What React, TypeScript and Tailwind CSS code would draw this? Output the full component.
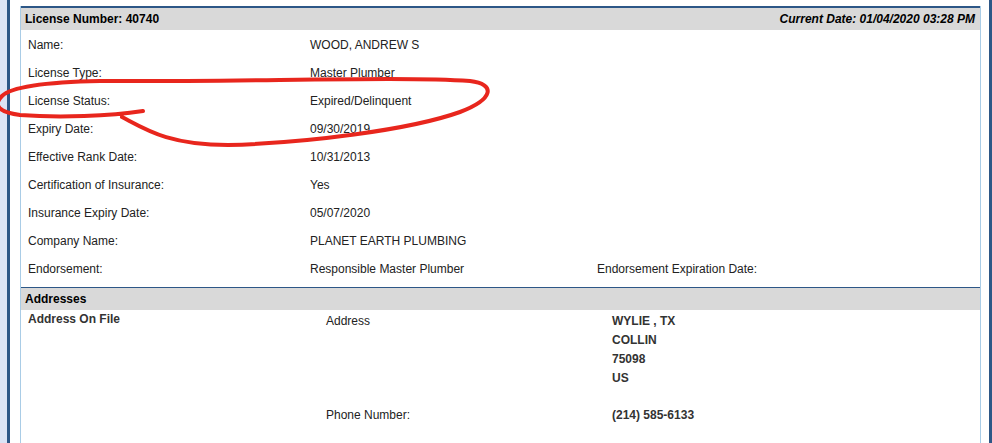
import React from 'react';

const rows: [string, string, string?][] = [
  ['Name:', 'WOOD, ANDREW S'],
  ['License Type:', 'Master Plumber'],
  ['License Status:', 'Expired/Delinquent'],
  ['Expiry Date:', '09/30/2019'],
  ['Effective Rank Date:', '10/31/2013'],
  ['Certification of Insurance:', 'Yes'],
  ['Insurance Expiry Date:', '05/07/2020'],
  ['Company Name:', 'PLANET EARTH PLUMBING'],
  ['Endorsement:', 'Responsible Master Plumber', 'Endorsement Expiration Date:'],
];

const App = () => {
  return (
    <div className="relative h-[443px] w-full overflow-hidden bg-[#dce4f6] pl-[7px] font-['Liberation_Sans',Arial,sans-serif] text-[12px] text-[#222]">
      <div className="h-full bg-white border-l-[3px] border-r-[3px] border-[#2d5787] pl-[10px] pr-[8px] pt-[6px]">
        <div className="h-full border-x border-[#a9cce6]">
          <header className="flex items-center justify-between h-[24px] border-t-2 border-[#2d5787] bg-[#d9d9d9] pl-[4px] pr-[5px] font-bold text-black">
            <p>License Number: 40740</p>
            <p className="italic">Current Date: 01/04/2020 03:28 PM</p>
          </header>
          <main className="pt-[1px] pb-[4px]">
            {rows.map(([label, value, extra]) => (
              <div key={label} className="grid grid-cols-[289px_287px_1fr] leading-[28px]">
                <p className="pl-[7px]">{label}</p>
                <p>{value}</p>
                <p>{extra}</p>
              </div>
            ))}
          </main>
          <section>
            <h2 className="h-[23px] border-t border-[#2d5787] bg-[#d9d9d9] pl-[4px] leading-[22px] font-bold text-black">
              Addresses
            </h2>
            <div className="grid grid-cols-[305px_286px_1fr] leading-[19px]">
              <p className="pl-[7px] font-bold text-[#333]">Address On File</p>
              <p className="pt-[2px]">Address</p>
              <div className="pt-[2px] font-bold text-[#333]">
                <p>WYLIE , TX</p>
                <p>COLLIN</p>
                <p>75098</p>
                <p>US</p>
              </div>
              <p className="col-start-2 mt-[18px]">Phone Number:</p>
              <p className="mt-[18px] font-bold text-[#333]">(214) 585-6133</p>
            </div>
          </section>
        </div>
      </div>
      <svg
        className="pointer-events-none absolute left-0 top-0"
        width="992"
        height="443"
        viewBox="0 0 992 443"
        fill="none"
      >
        <path
          d="M122 117 C 145 129, 168 145, 228 145 C 305 143, 410 130, 460 112 C 494 99, 496 84, 470 81 C 400 76, 250 82, 100 81 C 50 82, 12 86, 2 96 C -8 106, 0 112, 20 115 C 60 118, 110 116, 143 111"
          stroke="#e8261d"
          strokeWidth="4"
          strokeLinecap="round"
          strokeLinejoin="round"
        />
      </svg>
    </div>
  );
};

export default App;
